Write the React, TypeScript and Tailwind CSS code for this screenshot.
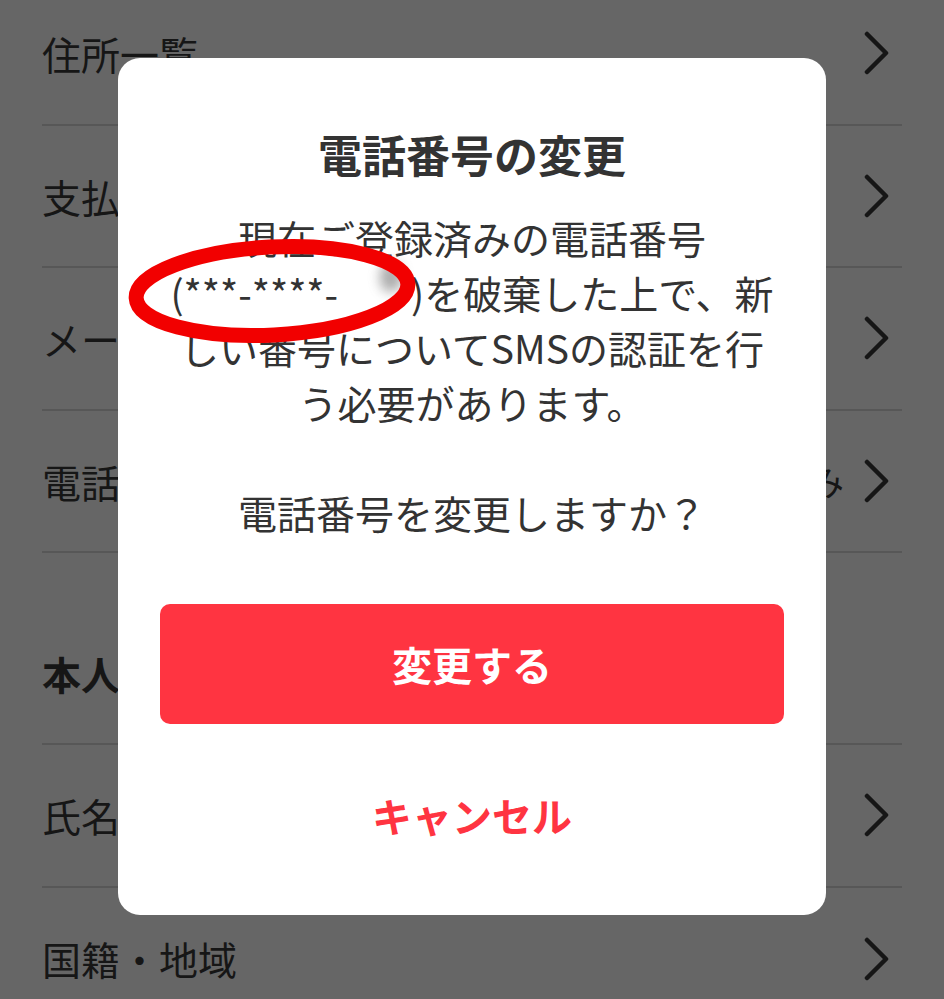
import React from "react";

const font = { fontFamily: '"Noto Sans CJK JP", "Noto Sans", sans-serif' };

function Chevron() {
  return (
    <svg width="26" height="44" viewBox="0 0 26 44" className="shrink-0">
      <path d="M3 3 L22 22 L3 41" fill="none" stroke="#161616" strokeWidth="4.5" strokeLinecap="round" strokeLinejoin="round" />
    </svg>
  );
}

function Row({ label, right, bold, header }: { label: string; right?: string; bold?: boolean; header?: boolean }) {
  return (
    <div
      className={`flex items-center justify-between border-b-2 border-[#575757] ${header ? "h-[192px] pt-[50px]" : "h-[142.5px]"}`}
    >
      <span className={`text-[39px] text-[#161616] ${bold ? "font-bold" : ""}`}>{label}</span>
      {!header && (
        <div className="flex items-center gap-[20px] pr-[12px]">
          {right && <span className="text-[35px] text-[#161616]">{right}</span>}
          <Chevron />
        </div>
      )}
    </div>
  );
}

export default function App() {
  return (
    <div className="relative w-[944px] h-[999px] overflow-hidden bg-[#666666]" style={font}>
      <div className="mx-[42px] -mt-[17px] flex flex-col">
        <Row label="住所一覧" />
        <Row label="支払い方法" />
        <Row label="メールアドレス" />
        <Row label="電話番号" right="登録済み" />
        <Row label="本人確認" bold header />
        <Row label="氏名" />
        <div className="flex items-center justify-between h-[142px]">
          <span className="text-[39px] text-[#161616]">国籍・地域</span>
          <div className="pr-[12px]">
            <Chevron />
          </div>
        </div>
      </div>

      <div className="absolute left-[118px] top-[58px] w-[708px] h-[857px] rounded-[22px] bg-white flex flex-col items-center px-[30px] pt-[66px]">
        <h2 className="text-[44px] leading-[60px] font-bold text-[#333333]">電話番号の変更</h2>
        <p className="mt-[26px] text-[39px] leading-[55px] text-[#333333] text-center whitespace-nowrap">
          現在ご登録済みの電話番号
          <br />
          <span className="relative">
            (***-****-<span className="opacity-0">****</span>)
          </span>
          を破棄した上で、新
          <br />
          しい番号についてSMSの認証を行
          <br />
          う必要があります。
        </p>
        <p className="mt-[55px] text-[39px] leading-[55px] text-[#333333] text-center">電話番号を変更しますか？</p>
        <div className="w-full px-[12px]">
          <button className="mt-[64px] w-full h-[120px] rounded-[10px] bg-[#ff3441] text-white text-[40px] font-bold">
            変更する
          </button>
        </div>
        <button className="mt-[31px] h-[120px] text-[40px] font-bold text-[#ff3441]">キャンセル</button>
      </div>

      <div className="absolute left-[380px] top-[262px] w-[22px] h-[30px] rounded-full bg-[#8a8a8a] blur-[6px] opacity-70" />

      <svg className="absolute left-0 top-0 pointer-events-none" width="944" height="999">
        <ellipse cx="272" cy="291" rx="136" ry="44" fill="none" stroke="#f20000" strokeWidth="15" transform="rotate(-3 272 291)" />
      </svg>
    </div>
  );
}
